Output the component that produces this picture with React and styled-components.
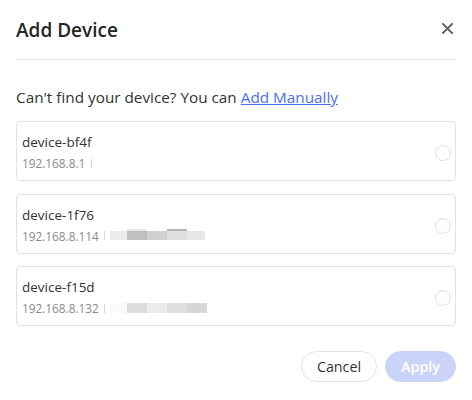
import React from "react";
import styled, { createGlobalStyle } from "styled-components";

const Global = createGlobalStyle`
  html, body { margin: 0; padding: 0; background: #fff; }
  body { font-family: "Open Sans", "Noto Sans", "Liberation Sans", sans-serif; color: #333; }
  * { box-sizing: border-box; }
`;

const Dialog = styled.div`
  width: 472px;
  height: 400px;
  padding: 0 16px;
  background: #fff;
  display: flex;
  flex-direction: column;
`;

const Header = styled.div`
  height: 60px;
  display: flex;
  align-items: center;
  justify-content: space-between;
  border-bottom: 1px solid #e6e6e6;
`;

const Title = styled.h2`
  margin: 0;
  font-size: 19px;
  line-height: 24px;
  font-weight: 600;
  color: #262626;
`;

const CloseButton = styled.button`
  border: 0;
  background: transparent;
  padding: 0;
  margin: 0 2px 3px 0;
  width: 14px;
  height: 14px;
  display: flex;
  align-items: center;
  justify-content: center;
  cursor: pointer;
`;

const Hint = styled.p`
  margin: 26px 0 0;
  font-size: 15.3px;
  line-height: 22px;
  color: #333;
`;

const Link = styled.a`
  color: #4b6ef5;
  text-decoration: underline;
  cursor: pointer;
`;

const List = styled.div`
  margin-top: 13px;
  display: flex;
  flex-direction: column;
  gap: 12.5px;
`;

const Card = styled.label`
  height: 60px;
  border: 1px solid #e3e3e3;
  border-radius: 4px;
  padding: 10px 4px 8px 5px;
  display: flex;
  align-items: flex-start;
  justify-content: space-between;
  cursor: pointer;
`;

const Info = styled.div`
  display: flex;
  flex-direction: column;
`;

const Name = styled.div`
  font-size: 13.5px;
  line-height: 20px;
  color: #333;
`;

const IpRow = styled.div`
  margin-top: 2px;
  height: 18px;
  display: flex;
  align-items: center;
`;

const Ip = styled.span`
  font-size: 11.8px;
  line-height: 18px;
  color: #8a8a8a;
`;

const Sep = styled.span`
  width: 1px;
  height: 9px;
  background: #d6d6d6;
  margin: 0 0 0 ${(p) => p.$gap}px;
`;

const Mosaic = styled.div`
  align-self: flex-end;
  margin-bottom: ${(p) => p.$bottom}px;
  margin-left: 5px;
  display: flex;
  flex-direction: column;
`;

const MosaicRow = styled.div`
  display: flex;
  height: ${(p) => p.$h}px;
`;

const Cell = styled.span`
  width: ${(p) => p.$w}px;
  height: 100%;
  background: ${(p) => p.$c};
`;

const Radio = styled.span`
  width: 16px;
  height: 16px;
  margin-top: 13px;
  border-radius: 50%;
  border: 1px solid #e0e0e0;
  flex: none;
`;

const Footer = styled.div`
  margin-top: 25px;
  display: flex;
  justify-content: flex-end;
  gap: 8px;
`;

const Button = styled.button`
  height: 31px;
  padding: 0 ${(p) => p.$pad}px;
  border-radius: 16px;
  font-family: inherit;
  font-size: 14.3px;
  line-height: 20px;
  cursor: pointer;
  border: 1px solid ${(p) => (p.$primary ? "#cad4f8" : "#e3e3e3")};
  background: ${(p) => (p.$primary ? "#cad4f8" : "#fff")};
  color: ${(p) => (p.$primary ? "#fff" : "#333")};
  font-weight: ${(p) => (p.$primary ? 600 : 400)};
`;

const devices = [
  { name: "device-bf4f", ip: "192.168.8.1", gap: 6, mosaic: null },
  {
    name: "device-1f76",
    ip: "192.168.8.114",
    gap: 5,
    bottom: 4.5,
    mosaic: [
      { h: 2.5, cells: [[17, "transparent"], [20, "#e9e9e9"], [20, "transparent"], [20, "#b4b4b4"], [18, "transparent"]] },
      { h: 9, cells: [[17, "#ebebeb"], [20, "#c0c0c0"], [20, "#d0d0d0"], [20, "#dedede"], [18, "#e6e6e6"]] },
    ],
  },
  {
    name: "device-f15d",
    ip: "192.168.8.132",
    gap: 5,
    bottom: 4,
    mosaic: [
      { h: 10, cells: [[17, "#fafafa"], [20, "#dcdcdc"], [20, "#ebebeb"], [20, "#dedede"], [20, "#d6d6d6"]] },
    ],
  },
];

function CloseIcon() {
  return (
    <svg width="11" height="11" viewBox="0 0 11 11" fill="none">
      <path d="M1 1L10 10M10 1L1 10" stroke="#666" strokeWidth="2" strokeLinecap="square" />
    </svg>
  );
}

export default function App() {
  return (
    <>
      <Global />
      <Dialog>
        <Header>
          <Title>Add Device</Title>
          <CloseButton aria-label="Close">
            <CloseIcon />
          </CloseButton>
        </Header>
        <Hint>
          Can't find your device? You can <Link>Add Manually</Link>
        </Hint>
        <List>
          {devices.map((d) => (
            <Card key={d.name}>
              <Info>
                <Name>{d.name}</Name>
                <IpRow>
                  <Ip>{d.ip}</Ip>
                  <Sep $gap={d.gap} />
                  {d.mosaic && (
                    <Mosaic $bottom={d.bottom}>
                      {d.mosaic.map((row, i) => (
                        <MosaicRow key={i} $h={row.h}>
                          {row.cells.map(([w, c], j) => (
                            <Cell key={j} $w={w} $c={c} />
                          ))}
                        </MosaicRow>
                      ))}
                    </Mosaic>
                  )}
                </IpRow>
              </Info>
              <Radio />
            </Card>
          ))}
        </List>
        <Footer>
          <Button $pad={15}>Cancel</Button>
          <Button $primary $pad={15}>Apply</Button>
        </Footer>
      </Dialog>
    </>
  );
}
